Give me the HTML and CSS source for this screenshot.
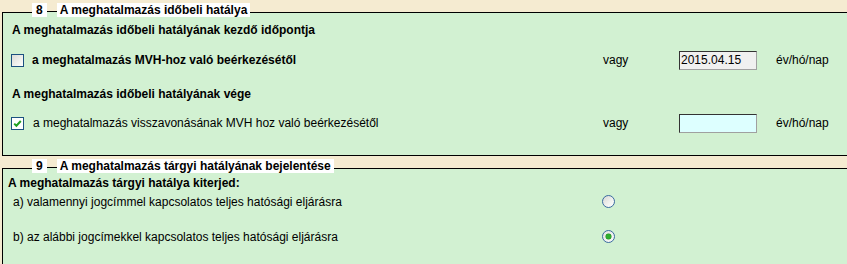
FILE: index.html
```html
<!DOCTYPE html>
<html lang="hu">
<head>
<meta charset="utf-8">
<title>Meghatalmazás</title>
<link rel="stylesheet" href="styles.css">
</head>
<body>
<fieldset class="fs fs-first">
  <legend class="lg"><span class="lg-num">8</span><span class="lg-gap"></span><span class="lg-title">A meghatalmazás időbeli hatálya</span></legend>
  <div class="fs-body body-8">
    <div class="heading h-start">A meghatalmazás időbeli hatályának kezdő időpontja</div>
    <div class="row row-1">
      <div class="opt bold"><span class="cb"></span><span>a meghatalmazás MVH-hoz való beérkezésétől</span></div>
      <div class="vagy">vagy</div>
      <div class="field field-gray">2015.04.15</div>
      <div class="unit">év/hó/nap</div>
    </div>
    <div class="heading h-end">A meghatalmazás időbeli hatályának vége</div>
    <div class="row row-2">
      <div class="opt"><span class="cb cb-on"><svg width="11" height="11" viewBox="0 0 11 11"><path d="M2.2 5.6 L4.4 7.8 L8.8 3" fill="none" stroke="#21a121" stroke-width="2"/></svg></span><span>a meghatalmazás visszavonásának MVH hoz való beérkezésétől</span></div>
      <div class="vagy">vagy</div>
      <div class="field field-cyan"></div>
      <div class="unit">év/hó/nap</div>
    </div>
  </div>
</fieldset>
<fieldset class="fs fs-second">
  <legend class="lg"><span class="lg-num">9</span><span class="lg-gap"></span><span class="lg-title">A meghatalmazás tárgyi hatályának bejelentése</span></legend>
  <div class="fs-body body-9">
    <div class="heading h-scope">A meghatalmazás tárgyi hatálya kiterjed:</div>
    <div class="rrow rrow-a">
      <div class="rtext">a) valamennyi jogcímmel kapcsolatos teljes hatósági eljárásra</div>
      <span class="radio"></span>
    </div>
    <div class="rrow rrow-b">
      <div class="rtext">b) az alábbi jogcímekkel kapcsolatos teljes hatósági eljárásra</div>
      <span class="radio radio-on"><span class="dot"></span></span>
    </div>
  </div>
</fieldset>
</body>
</html>
```
FILE: styles.css
```css
html, body {
  margin: 0;
  padding: 0;
  overflow: hidden;
}
body {
  background: #f5ebd1;
  font-family: "Liberation Sans", Arial, sans-serif;
  font-size: 12px;
  color: #000;
}
.fs {
  background: #d2f1d2;
  border: 1px solid #000;
  border-right: none;
  margin: 3px 0 0 2px;
  padding: 0;
  min-width: 0;
}
.lg {
  margin-left: 29px;
  padding: 0;
  height: 18px;
  line-height: 14px;
  font-weight: bold;
  font-size: 12px;
}
.lg-num, .lg-title, .lg-gap {
  display: inline-block;
  vertical-align: top;
}
.lg-num, .lg-title {
  background: #fff;
  height: 14px;
}
.lg-num {
  padding: 0 4px 0 4px;
}
.lg-gap {
  width: 10px;
  height: 8px;
  border-bottom: 1px solid #000;
}
.lg-title {
  padding: 0 3px 0 3px;
}
.bold, .heading {
  font-weight: bold;
}
.body-8 {
  padding: 0 0 22px 9px;
}
.h-start {
  height: 18px;
  line-height: 18px;
}
.h-end {
  height: 18px;
  line-height: 18px;
  margin-top: 15px;
}
.row {
  display: grid;
  grid-template-columns: 591px 76px 97px 1fr;
  align-items: center;
  height: 20px;
}
.row-1 {
  margin-top: 11px;
}
.row-2 {
  margin-top: 10px;
}
.opt {
  display: flex;
  align-items: center;
  gap: 8px;
  margin-left: -1px;
}
.row-2 .opt {
  gap: 9px;
}
.cb {
  display: inline-flex;
  align-items: center;
  justify-content: center;
  width: 13px;
  height: 13px;
  box-sizing: border-box;
  border: 1px solid #1c5180;
  background: linear-gradient(135deg, #dcdcd7 0%, #f4f4f2 70%, #ffffff 100%);
  flex: none;
}
.cb-on {
  background: #fff;
}
.cb-on svg {
  display: block;
}
.field {
  box-sizing: border-box;
  width: 78px;
  height: 19px;
  border: 1px solid;
  border-color: #333 #a0a0a0 #a0a0a0 #333;
  padding-left: 1px;
  line-height: 17px;
  font-size: 12px;
}
.field-gray {
  background: #f0f0f0;
}
.field-cyan {
  background: #ddffff;
}
.body-9 {
  padding: 0 0 30px 5px;
}
.h-scope {
  height: 12px;
  line-height: 12px;
}
.rrow {
  display: grid;
  grid-template-columns: 594px 13px;
  align-items: center;
  height: 20px;
}
.rrow-a {
  margin-top: 3px;
}
.rrow-b {
  margin-top: 15px;
}
.rtext {
  padding-left: 5px;
}
.radio {
  display: flex;
  align-items: center;
  justify-content: center;
  width: 13px;
  height: 13px;
  box-sizing: border-box;
  border: 1px solid #3a6aa0;
  border-radius: 50%;
  background: linear-gradient(135deg, #d8d8d4 0%, #f2f2f0 60%, #ffffff 100%);
  margin-top: -2px;
}
.radio-on {
  background: linear-gradient(135deg, #e4e4e0 0%, #fafafa 100%);
}
.dot {
  width: 5px;
  height: 5px;
  border-radius: 50%;
  background: #2fae2f;
  box-shadow: 0 0 0 0.5px #1f8f1f;
}
```
